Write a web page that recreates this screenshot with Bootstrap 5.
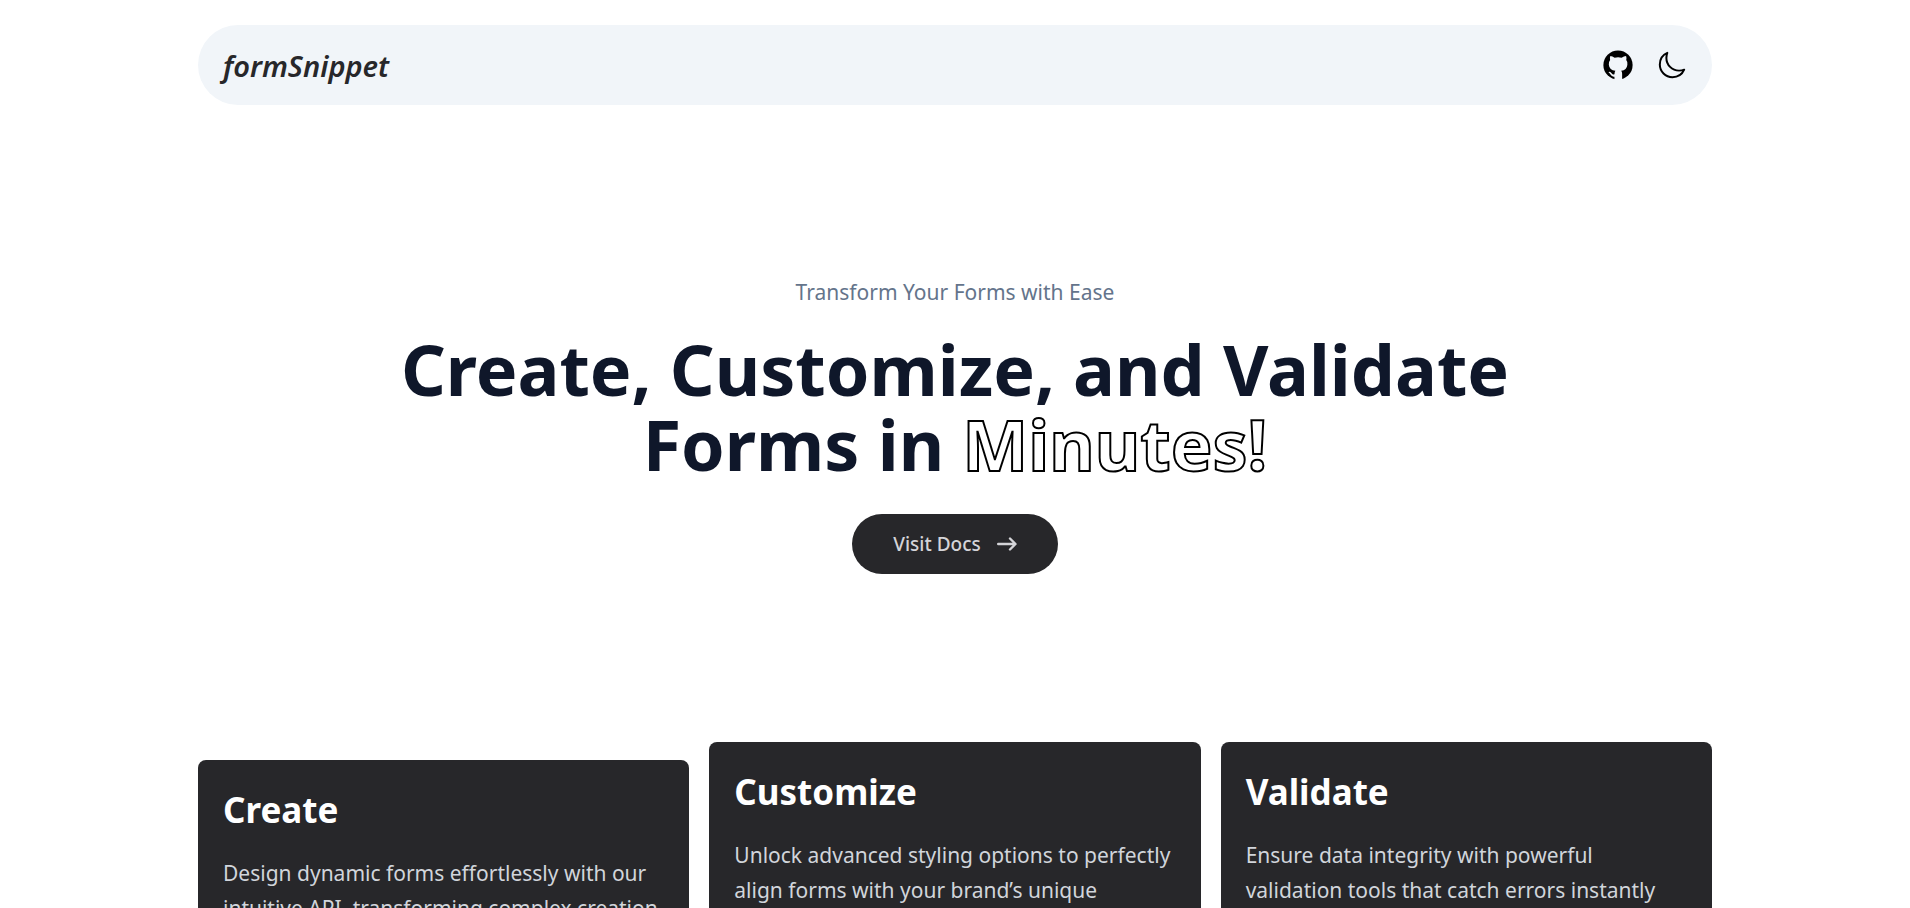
<!DOCTYPE html>
<html lang="en">
<head>
<meta charset="utf-8">
<meta name="viewport" content="width=device-width, initial-scale=1">
<title>formSnippet</title>
<link href="https://cdn.jsdelivr.net/npm/bootstrap@5.3.0/dist/css/bootstrap.min.css" rel="stylesheet">
<style>
  body { font-family: "Segoe UI", "Noto Sans", sans-serif; color: #0f172a; background: #fff; }
  .page-wrap { max-width: 1514px; }
  .site-head { padding-top: 25px; }
  .site-bar { min-height: 80px; padding: 0 25px; background: #f1f5f9; }
  .brand-link { padding-top: 2px; font-size: 29px; line-height: 40px; font-weight: 600; font-style: italic; color: #27272a; }
  .icon-btn { color: #000; line-height: 0; }
  .hero { padding: 170px 0 168px; }
  .hero-lead { margin-bottom: 22px; font-size: 21px; line-height: 35px; color: #64748b; }
  .hero-title { font-size: 70px; line-height: 75px; font-weight: 700; max-width: 1250px; }
  .outlined { color: #fff; -webkit-text-stroke: 2px #000; }
  .docs-btn { height: 60px; padding: 0 40px; font-size: 19px; font-weight: 500; }
  .docs-btn, .docs-btn:hover { background: #27272a; color: #d4d4d8; }
  .features { gap: 20px; }
  .feature { flex: 1 1 0; padding: 25px; border-radius: 8px; background: #27272a; }
  .feature-low { margin-top: 18px; margin-bottom: -18px; }
  .feature h2 { margin-bottom: 21px; font-size: 35px; line-height: 50px; font-weight: 700; color: #fff; }
  .feature p { font-size: 21px; line-height: 35px; color: #d1d5db; }
</style>
</head>
<body>
<div class="page-wrap mx-auto">
  <header class="site-head">
    <nav class="site-bar rounded-pill d-flex align-items-center justify-content-between">
      <a class="brand-link text-decoration-none" href="#">formSnippet</a>
      <div class="d-flex align-items-center gap-4">
        <a class="icon-btn" href="#" aria-label="GitHub">
          <svg width="30" height="30" viewBox="0 0 16 16">
            <circle cx="8" cy="8" r="7.8" fill="currentColor"/>
            <path fill="#f1f5f9" d="M3.900 3.200Q5 3.200 6.200 4.100Q8 3.600 9.900 4.100Q11.200 3.200 12.300 3.200Q12.700 4.300 12.400 5.300Q13.200 6.200 13 7.800Q12.700 10.700 9.700 11.100Q10.200 11.700 10.200 12.700V16H6.100V14.200Q4.700 14.400 4 13.100Q3.600 12.200 2.900 11.800Q3.900 11.300 4.700 12.500Q5.200 13.300 6.100 12.900Q6.200 11.600 6.600 11.100Q3.400 10.700 3.100 7.800Q3 6.200 3.800 5.300Q3.500 4.300 3.900 3.200z"/>
          </svg>
        </a>
        <button class="icon-btn btn p-0 border-0" type="button" aria-label="Switch theme">
          <svg width="30" height="30" viewBox="0 0 512 512" fill="none" stroke="currentColor" stroke-width="34" stroke-linecap="round" stroke-linejoin="round"><path d="M160 136c0-30.620 4.510-61.610 16-88C99.570 81.270 48 159.320 48 248c0 119.290 96.710 216 216 216 88.680 0 166.730-51.570 200-128-26.390 11.490-57.380 16-88 16-119.290 0-216-96.710-216-216z"/></svg>
        </button>
      </div>
    </nav>
  </header>

  <main>
    <section class="hero d-flex flex-column align-items-center text-center">
      <p class="hero-lead">Transform Your Forms with Ease</p>
      <h1 class="hero-title mb-4">Create, Customize, and Validate Forms in <span class="outlined">Minutes!</span></h1>
      <a class="docs-btn btn rounded-pill d-inline-flex align-items-center gap-3 mt-2" href="#">
        Visit Docs
        <svg width="20" height="14" viewBox="0 0 20 14" fill="none" stroke="currentColor" stroke-width="2.400" stroke-linecap="round" stroke-linejoin="round" aria-hidden="true"><path d="M1.200 7h17M13 1.500l5.500 5.500-5.500 5.500"/></svg>
      </a>
    </section>

    <section class="features d-flex align-items-stretch">
      <article class="feature feature-low">
        <h2>Create</h2>
        <p>Design dynamic forms effortlessly with our intuitive API, transforming complex creation into a simple process.</p>
      </article>
      <article class="feature">
        <h2>Customize</h2>
        <p>Unlock advanced styling options to perfectly align forms with your brand’s unique identity.</p>
      </article>
      <article class="feature">
        <h2>Validate</h2>
        <p>Ensure data integrity with powerful validation tools that catch errors instantly and guide your users.</p>
      </article>
    </section>
  </main>
</div>
<script src="https://cdn.jsdelivr.net/npm/bootstrap@5.3.0/dist/js/bootstrap.bundle.min.js"></script>
</body>
</html>
